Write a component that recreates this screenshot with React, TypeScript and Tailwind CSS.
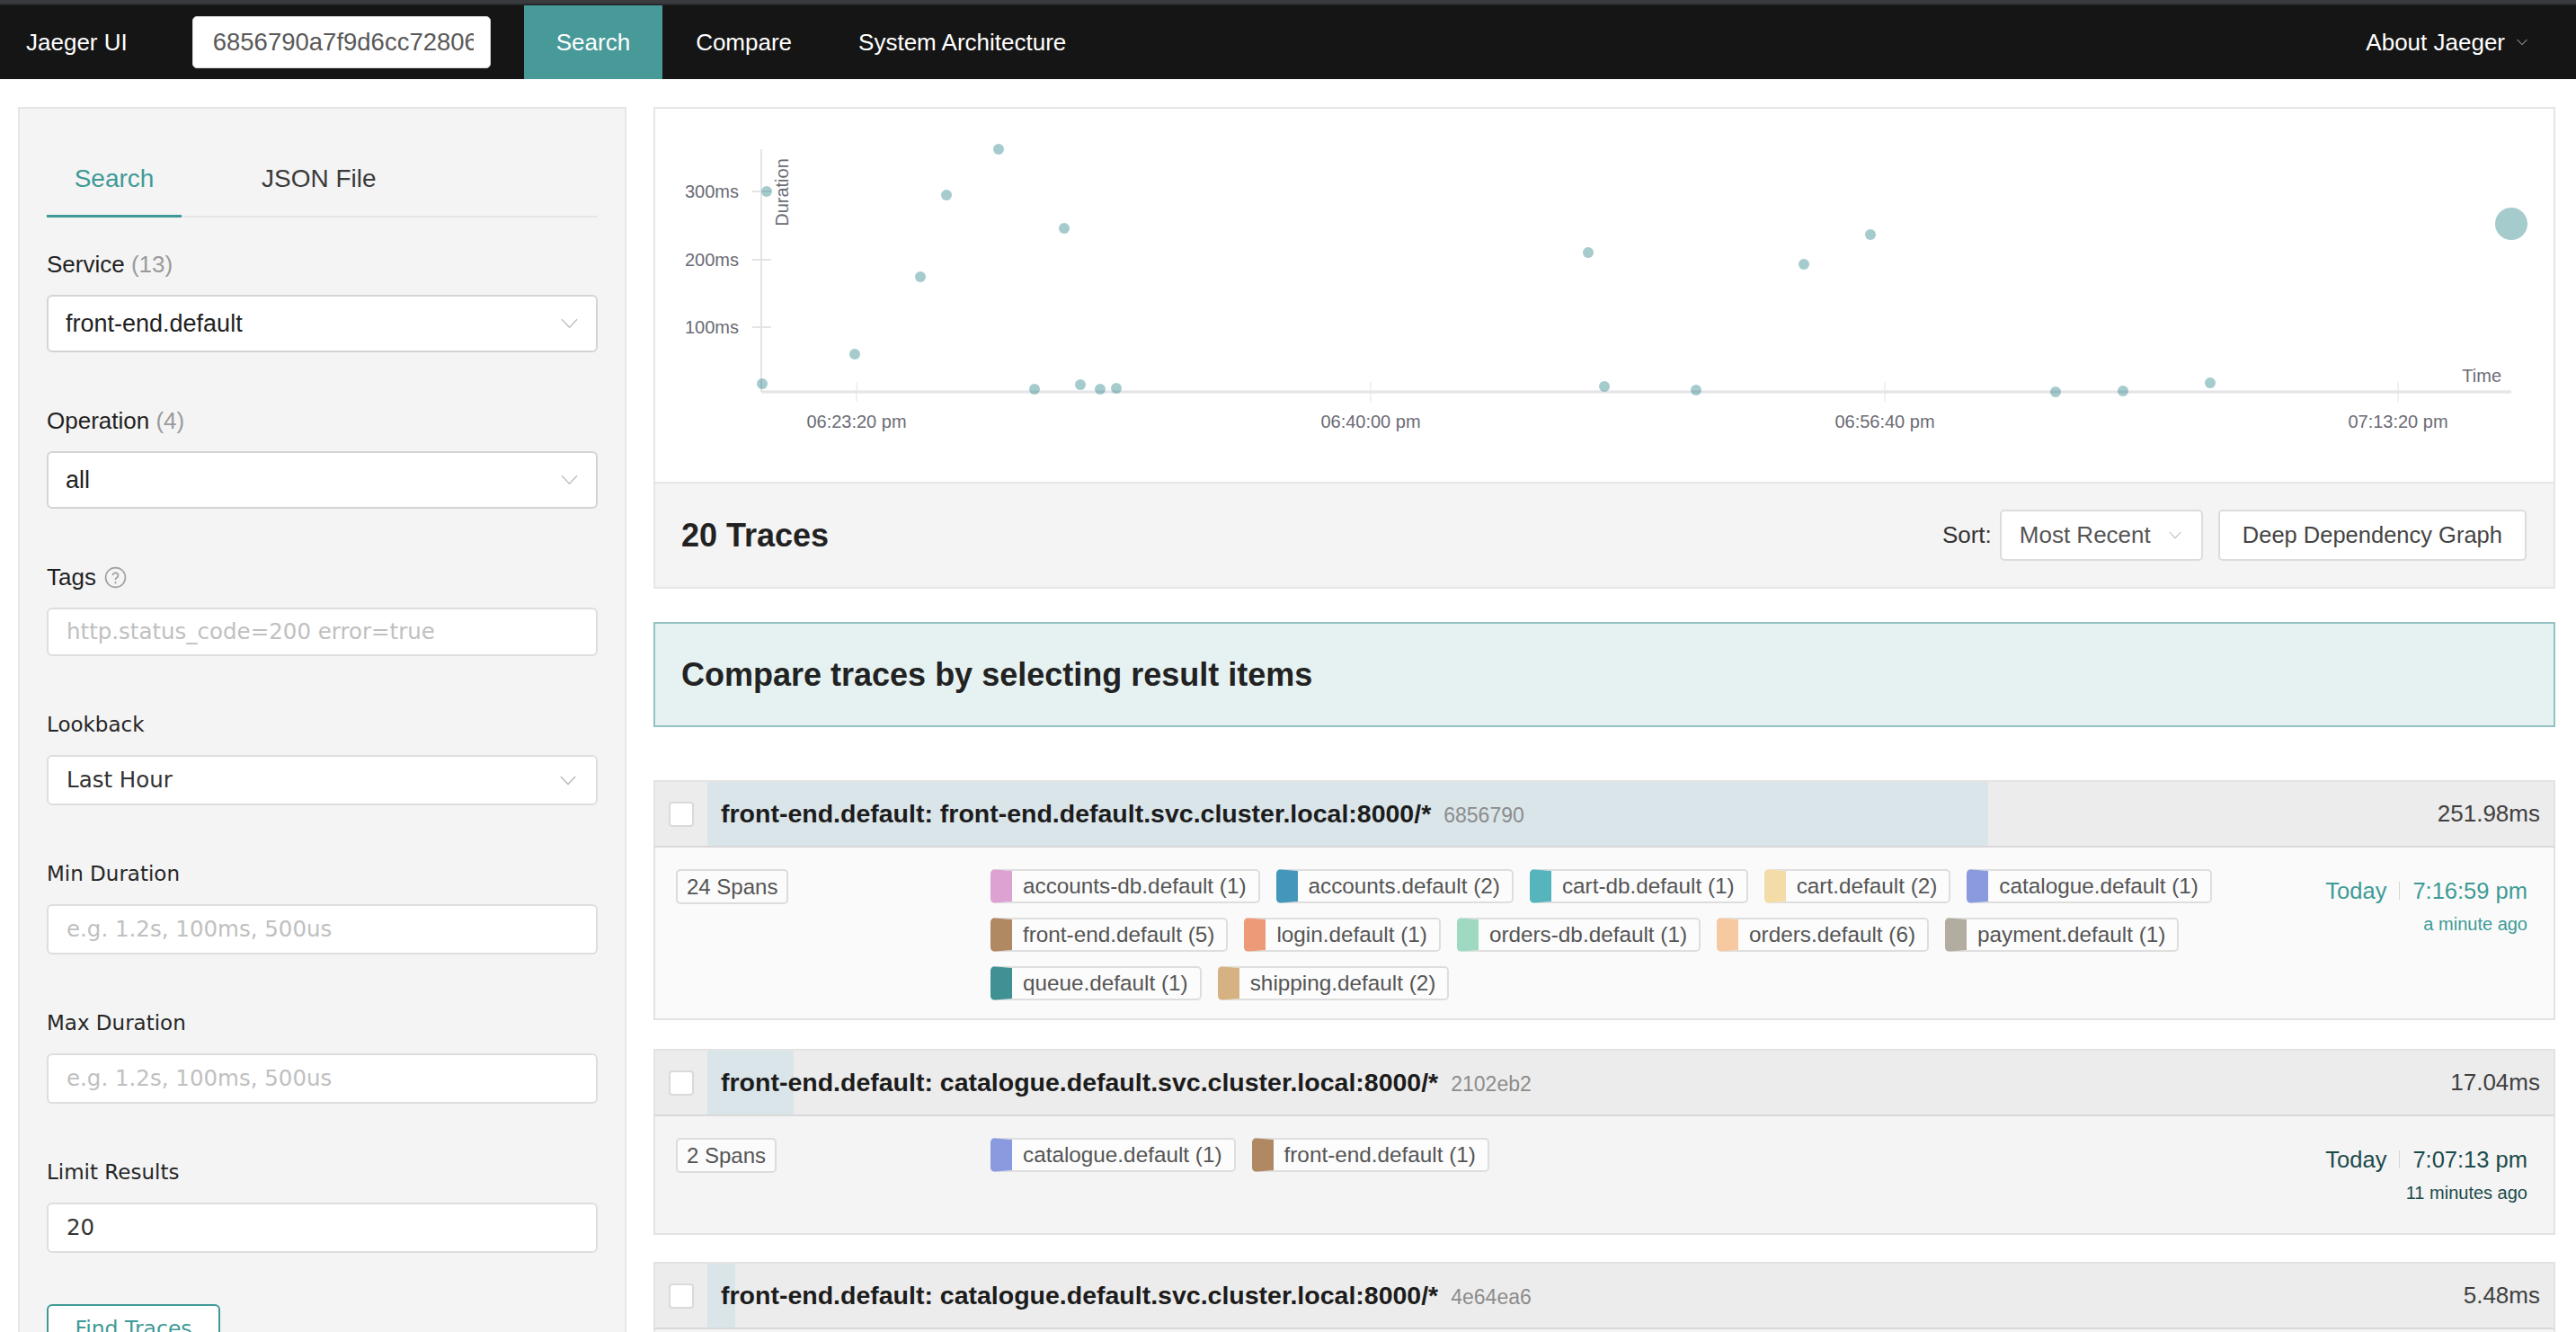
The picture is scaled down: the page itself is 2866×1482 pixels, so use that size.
import React from "react";

type Tag = { label: string; color: string };

type Trace = {
  title: string;
  id: string;
  duration: number;
  spans: string;
  tags: Tag[];
  time: string;
  ago: string;
  active?: boolean;
};

const MAX_DURATION = 363.1;

const traces: Trace[] = [
  {
    title: "front-end.default: front-end.default.svc.cluster.local:8000/*",
    id: "6856790",
    duration: 251.98,
    spans: "24 Spans",
    time: "7:16:59 pm",
    ago: "a minute ago",
    active: true,
    tags: [
      { label: "accounts-db.default (1)", color: "border-l-[#dda2d2]" },
      { label: "accounts.default (2)", color: "border-l-[#4596bb]" },
      { label: "cart-db.default (1)", color: "border-l-[#55b4bc]" },
      { label: "cart.default (2)", color: "border-l-[#f3dca7]" },
      { label: "catalogue.default (1)", color: "border-l-[#8a9ade]" },
      { label: "front-end.default (5)", color: "border-l-[#b08862]" },
      { label: "login.default (1)", color: "border-l-[#ec9a78]" },
      { label: "orders-db.default (1)", color: "border-l-[#9fd9c1]" },
      { label: "orders.default (6)", color: "border-l-[#f7c9a0]" },
      { label: "payment.default (1)", color: "border-l-[#b3aca0]" },
      { label: "queue.default (1)", color: "border-l-[#3f9193]" },
      { label: "shipping.default (2)", color: "border-l-[#d6b283]" },
    ],
  },
  {
    title: "front-end.default: catalogue.default.svc.cluster.local:8000/*",
    id: "2102eb2",
    duration: 17.04,
    spans: "2 Spans",
    time: "7:07:13 pm",
    ago: "11 minutes ago",
    tags: [
      { label: "catalogue.default (1)", color: "border-l-[#8a9ade]" },
      { label: "front-end.default (1)", color: "border-l-[#b08862]" },
    ],
  },
  {
    title: "front-end.default: catalogue.default.svc.cluster.local:8000/*",
    id: "4e64ea6",
    duration: 5.48,
    spans: "2 Spans",
    time: "7:06:41 pm",
    ago: "12 minutes ago",
    tags: [
      { label: "catalogue.default (1)", color: "border-l-[#8a9ade]" },
      { label: "front-end.default (1)", color: "border-l-[#b08862]" },
    ],
  },
];

// page coordinates of the scatter points
const dots: [number, number][] = [
  [848, 427], [853, 213], [951, 394], [1024, 308], [1053, 217], [1111, 166],
  [1151, 433], [1184, 254], [1202, 428], [1224, 433], [1242, 432], [1767, 281],
  [1785, 430], [1887, 434], [2007, 294], [2081, 261], [2287, 436], [2362, 435],
  [2459, 426],
];

const xTicks = [
  { x: 953, label: "06:23:20 pm" },
  { x: 1525, label: "06:40:00 pm" },
  { x: 2097, label: "06:56:40 pm" },
  { x: 2668, label: "07:13:20 pm" },
];

const yTicks = [
  { y: 213, label: "300ms" },
  { y: 289, label: "200ms" },
  { y: 364, label: "100ms" },
];

function Chevron({ className }: { className?: string }) {
  return (
    <svg viewBox="0 0 20 12" className={className} fill="none" stroke="currentColor" strokeWidth="1.5">
      <path d="M1 1l9 9.5L19 1" />
    </svg>
  );
}

function HelpIcon() {
  return (
    <svg viewBox="0 0 24 24" className="h-[25px] w-[25px] text-[#a0a0a0]" fill="none" stroke="currentColor" strokeWidth="1.6" strokeLinecap="round">
      <circle cx="12" cy="12" r="10.5" />
      <path d="M9.1 9a3 3 0 0 1 5.8 1c0 2-2.9 2.4-2.9 4" />
      <path d="M12 17.6h.01" strokeWidth="2.2" />
    </svg>
  );
}

function Chart() {
  return (
    <div className="h-[419px] border-2 border-[#e6e6e6] bg-white">
      <svg width={2112} height={415} className="block">
        <g transform="translate(-729 -121)" fontFamily="'Liberation Sans', Arial, sans-serif">
          <line x1={847} y1={166} x2={847} y2={436} stroke="#e4e4e8" strokeWidth={2} />
          {yTicks.map((t) => (
            <g key={t.label}>
              <line x1={837} y1={t.y} x2={858} y2={t.y} stroke="#e4e4e8" strokeWidth={2} />
              <text x={822} y={t.y} textAnchor="end" dominantBaseline="central" fontSize={20} fill="#6b6b75">
                {t.label}
              </text>
            </g>
          ))}
          <text x={870} y={214} transform="rotate(-90 870 214)" textAnchor="middle" dominantBaseline="central" fontSize={20} fill="#6b6b75">
            Duration
          </text>
          {xTicks.map((t) => (
            <g key={t.label}>
              <line x1={t.x} y1={425} x2={t.x} y2={447} stroke="#ececef" strokeWidth={1.5} />
              <text x={t.x} y={469} textAnchor="middle" dominantBaseline="central" fontSize={20} fill="#6b6b75">
                {t.label}
              </text>
            </g>
          ))}
          <line x1={847} y1={436} x2={2794} y2={436} stroke="#e4e4e9" strokeWidth={3} />
          <text x={2783} y={418} textAnchor="end" dominantBaseline="central" fontSize={20} fill="#6b6b75">
            Time
          </text>
          {dots.map(([x, y], i) => (
            <circle key={i} cx={x} cy={y} r={6} fill="#1f7e82" fillOpacity={0.4} />
          ))}
          <circle cx={2794} cy={249} r={18} fill="#1f7e82" fillOpacity={0.4} />
        </g>
      </svg>
    </div>
  );
}

function FormItem({
  label,
  extra,
  first,
  children,
}: {
  label: React.ReactNode;
  extra?: React.ReactNode;
  first?: boolean;
  children: React.ReactNode;
}) {
  return (
    <div className={first ? "mt-[32px]" : "mt-[56px]"}>
      <div className="flex h-[40px] items-center gap-[9px]">
        {label}
        {extra}
      </div>
      <div className="mt-[14px]">{children}</div>
    </div>
  );
}

function LowerField({ value, placeholder, select, h = "h-[56px]" }: { value?: string; placeholder?: string; select?: boolean; h?: string }) {
  return (
    <div className={`flex ${h} items-center justify-between rounded-[6px] border-2 border-[#dedede] bg-white pl-[20px] pr-[22px] font-['DejaVu_Sans',sans-serif] text-[24.5px]`}>
      {value ? <span className="text-[#333]">{value}</span> : <span className="text-[#c0c0c0]">{placeholder}</span>}
      {select && <Chevron className="h-[11px] w-[18px] text-[#b5b5b5]" />}
    </div>
  );
}

function LowerLabel({ children }: { children: React.ReactNode }) {
  return <span className="font-['DejaVu_Sans',sans-serif] text-[23px] text-[#262626]">{children}</span>;
}

function TraceItem({ trace, className }: { trace: Trace; className?: string }) {
  const timeColor = trace.active ? "text-[#3e9a96]" : "text-[#1b4a4a]";
  return (
    <div className={className}>
      <div className="flex h-[75px] border-2 border-[#e3e3e3] border-b-[#d9d9d9] bg-[#ececec]">
        <div className="flex w-[58px] shrink-0 items-center justify-center">
          <div className="h-[28px] w-[28px] rounded-[4px] border-2 border-[#dadada] bg-white" />
        </div>
        <div className="relative flex min-w-0 flex-1 items-center">
          <div className="absolute inset-y-0 left-0 bg-[#dae5ea]" style={{ width: `${(trace.duration / MAX_DURATION) * 100}%` }} />
          <div className="relative flex items-baseline whitespace-nowrap pl-[15px]">
            <span className="text-[28.5px] font-bold text-[#1c1c1c]">{trace.title}</span>
            <span className="ml-[14px] text-[23px] text-[#8c8c8c]">{trace.id}</span>
          </div>
          <span className="relative ml-auto pr-[15px] text-[26px] text-[#404040]">{trace.duration}ms</span>
        </div>
      </div>
      <div className={`flex border-2 border-t-0 border-[#e3e3e3] pb-[4px] pl-[23px] pr-[29px] pt-[24px] ${trace.active ? "bg-[#fafafa]" : "bg-[#f4f4f4]"}`}>
        <div className="w-[350px] shrink-0">
          <span className="inline-flex h-[39px] items-center rounded-[5px] border-2 border-[#dcdcdc] bg-[#fbfbfb] px-[10px] text-[24px] text-[#555]">
            {trace.spans}
          </span>
        </div>
        <div className="flex min-w-0 flex-1 flex-wrap content-start gap-x-[18px]">
          {trace.tags.map((t) => (
            <span
              key={t.label}
              className={`mb-[16px] inline-flex h-[38px] items-center whitespace-nowrap rounded-[5px] border-2 border-[#dedede] border-l-[24px] bg-[#fcfcfc] pl-[12px] pr-[13px] text-[24.3px] text-[#555] ${t.color}`}
            >
              {t.label}
            </span>
          ))}
        </div>
        <div className={`min-h-[102px] w-[330px] shrink-0 text-right ${timeColor}`}>
          <div className="flex h-[48px] items-center justify-end text-[25.5px]">
            <span>Today</span>
            <span className="mx-[14px] h-[20px] w-px bg-[#d6d6d6]" />
            <span>{trace.time}</span>
          </div>
          <div className="flex h-[26px] items-center justify-end text-[20px]">{trace.ago}</div>
        </div>
      </div>
    </div>
  );
}

export default function App() {
  return (
    <div className="min-h-screen overflow-hidden bg-white font-['Liberation_Sans',Arial,sans-serif] text-[#333]">
      <div className="h-[4px] bg-[#3a3b3e]" />
      <div className="h-[2px] bg-[#27282b]" />
      <nav className="flex h-[82px] items-stretch bg-[#151515] pl-[29px] pr-[54px] text-[26px] text-white">
        <div className="flex items-center">Jaeger UI</div>
        <div className="ml-[72px] flex items-center">
          <input
            readOnly
            value="6856790a7f9d6cc72806e1b"
            className="h-[58px] w-[332px] rounded-[5px] border border-[#d9d9d9] bg-white pl-[22px] pr-[18px] text-[27.5px] text-[#595959] outline-none"
          />
        </div>
        <div className="ml-[37px] flex">
          <div className="flex items-center bg-[#489a98] px-[36px]">Search</div>
          <div className="flex items-center px-[37px]">Compare</div>
          <div className="flex items-center px-[37px]">System Architecture</div>
        </div>
        <div className="ml-auto flex items-center gap-[13px]">
          About Jaeger
          <Chevron className="h-[8px] w-[12px] text-[#cfcfcf]" />
        </div>
      </nav>

      <div className="flex gap-[30px] pl-[20px] pr-[23px] pt-[31px]">
        <aside className="h-[1420px] w-[677px] shrink-0 border-2 border-[#e6e6e6] bg-[#f4f4f4] px-[30px] pt-[37px]">
          <div className="flex border-b-2 border-[#e6e6e6] text-[28px]">
            <div className="relative flex h-[82px] w-[150px] items-center justify-center text-[#3f9a96]">
              Search
              <span className="absolute -bottom-[2px] left-0 right-0 h-[3px] bg-[#3f9a96]" />
            </div>
            <div className="flex h-[82px] items-center pl-[89px] text-[#3a3a3a]">JSON File</div>
          </div>

          <FormItem first label={<span className="text-[26px] text-[#1f1f1f]">Service <span className="text-[#9a9a9a]">(13)</span></span>}>
            <div className="flex h-[64px] items-center justify-between rounded-[6px] border-2 border-[#d4d4d4] bg-white pl-[19px] pr-[20px] text-[27px] text-[#222]">
              front-end.default
              <Chevron className="h-[12px] w-[19px] text-[#c0c0c0]" />
            </div>
          </FormItem>

          <FormItem label={<span className="text-[26px] text-[#1f1f1f]">Operation <span className="text-[#9a9a9a]">(4)</span></span>}>
            <div className="flex h-[64px] items-center justify-between rounded-[6px] border-2 border-[#d4d4d4] bg-white pl-[19px] pr-[20px] text-[27px] text-[#222]">
              all
              <Chevron className="h-[12px] w-[19px] text-[#c0c0c0]" />
            </div>
          </FormItem>

          <FormItem label={<span className="text-[26px] text-[#1f1f1f]">Tags</span>} extra={<HelpIcon />}>
            <LowerField h="h-[54px]" placeholder="http.status_code=200 error=true" />
          </FormItem>

          <FormItem label={<LowerLabel>Lookback</LowerLabel>}>
            <LowerField value="Last Hour" select />
          </FormItem>

          <FormItem label={<LowerLabel>Min Duration</LowerLabel>}>
            <LowerField placeholder="e.g. 1.2s, 100ms, 500us" />
          </FormItem>

          <FormItem label={<LowerLabel>Max Duration</LowerLabel>}>
            <LowerField placeholder="e.g. 1.2s, 100ms, 500us" />
          </FormItem>

          <FormItem label={<LowerLabel>Limit Results</LowerLabel>}>
            <LowerField value="20" />
          </FormItem>

          <button className="mt-[57px] h-[56px] w-[193px] rounded-[6px] border-2 border-[#3f9a96] bg-white font-['DejaVu_Sans',sans-serif] text-[23.5px] text-[#3f9a96]">
            Find Traces
          </button>
        </aside>

        <main className="min-w-0 flex-1">
          <Chart />

          <div className="flex h-[117px] items-center border-2 border-t-0 border-[#e6e6e6] bg-[#f4f4f4] pl-[29px] pr-[30px]">
            <h2 className="text-[36px] font-bold text-[#222]">20 Traces</h2>
            <div className="ml-auto flex items-center">
              <span className="text-[26px] text-[#333]">Sort:</span>
              <div className="ml-[9px] flex h-[57px] w-[226px] items-center justify-between rounded-[5px] border-2 border-[#dcdcdc] bg-white pl-[20px] pr-[22px] text-[26px] text-[#555]">
                Most Recent
                <Chevron className="h-[9px] w-[14px] text-[#bdbdbd]" />
              </div>
              <button className="ml-[17px] h-[57px] rounded-[5px] border-2 border-[#dcdcdc] bg-white px-[25px] text-[25.5px] text-[#444]">
                Deep Dependency Graph
              </button>
            </div>
          </div>

          <div className="mt-[37px] flex h-[117px] items-center border-2 border-[#93c2c3] bg-[#e6f2f2] pl-[29px]">
            <h2 className="text-[36px] font-bold text-[#222]">Compare traces by selecting result items</h2>
          </div>

          <TraceItem trace={traces[0]} className="mt-[59px]" />
          <TraceItem trace={traces[1]} className="mt-[32px]" />
          <TraceItem trace={traces[2]} className="mt-[30px]" />
        </main>
      </div>
    </div>
  );
}
